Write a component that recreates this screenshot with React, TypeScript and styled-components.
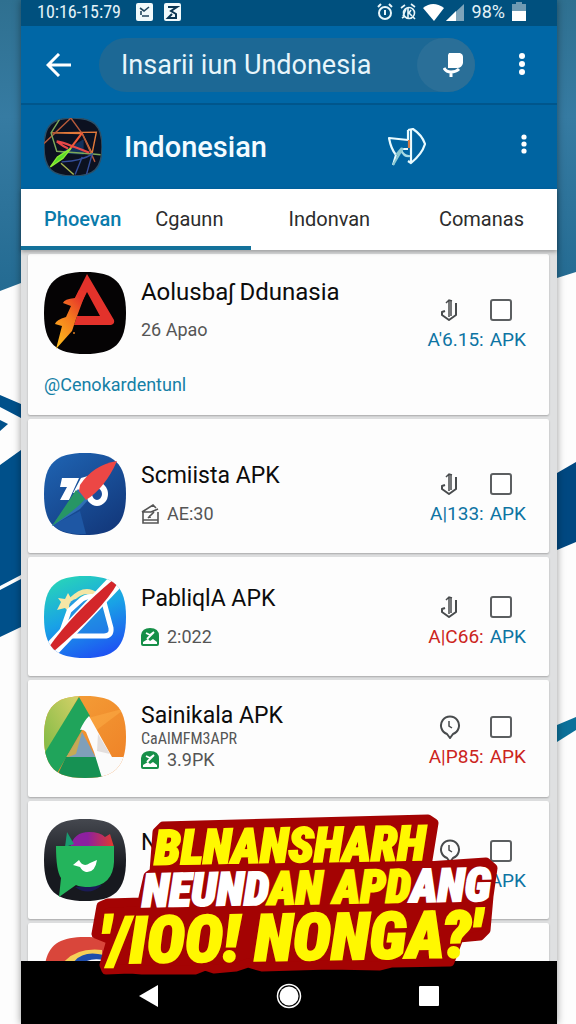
import React from 'react';
import styled, { createGlobalStyle } from 'styled-components';

const GlobalStyle = createGlobalStyle`
  * { box-sizing: border-box; }
  html, body { margin: 0; padding: 0; }
  body { background: #fdfdfd; font-family: Roboto, "Liberation Sans", sans-serif; color: #0c0c0c; }
  button, input { font: inherit; color: inherit; margin: 0; padding: 0; border: 0; background: none; }
  svg { display: block; flex: none; }
`;

const Page = styled.div`
  position: relative;
  height: 100vh;
  padding: 0 19px 0 21px;
  overflow: hidden;
`;

const Backdrop = styled.svg`
  position: absolute;
  inset: 0;
  width: 100%;
  height: 100%;
`;

const Phone = styled.div`
  position: relative;
  display: flex;
  flex-direction: column;
  height: 100%;
  background: #dfe0e1;
  box-shadow: 0 0 8px rgba(0, 0, 0, 0.4);
`;

const StatusBar = styled.div`
  display: flex;
  align-items: center;
  height: 26px;
  flex: none;
  padding: 0 31px 3px 16px;
  background: #00507e;
  color: #e4f3f8;
  font-size: 18px;
  line-height: 20px;
`;

const StatusGroup = styled.div<{ $gap: number }>`
  display: flex;
  align-items: center;
  gap: ${(p) => p.$gap}px;
`;

const Time = styled.span`
  font-family: "Roboto Condensed", Roboto, sans-serif;
  font-size: 18px;
  margin-right: 4px;
`;

const Spacer = styled.div`
  flex: 1;
`;

const SearchBar = styled.div`
  display: flex;
  align-items: center;
  height: 79px;
  flex: none;
  padding: 0 19px 0 22px;
  background: #0067a6;
  border-bottom: 2px solid #00568c;
`;

const IconButton = styled.button`
  display: flex;
  align-items: center;
  justify-content: center;
  flex: none;
  width: 32px;
  height: 48px;
  color: #fff;
  cursor: pointer;
`;

const SearchPill = styled.label`
  display: flex;
  align-items: center;
  flex: 1;
  min-width: 0;
  height: 54px;
  margin: 0 31px 0 24px;
  padding-left: 22px;
  border-radius: 27px;
  background: #1c6895;
`;

const SearchInput = styled.input`
  flex: 1;
  min-width: 0;
  color: #e8f6fb;
  font-size: 27px;
  line-height: 36px;
  outline: none;
`;

const MicButton = styled.button`
  display: flex;
  align-items: center;
  justify-content: center;
  flex: none;
  width: 58px;
  height: 54px;
  padding-left: 14px;
  border-radius: 27px;
  background: #2a6f98;
  cursor: pointer;
`;

const TitleBar = styled.header`
  display: flex;
  align-items: center;
  height: 84px;
  flex: none;
  padding: 0 17px 0 23px;
  background: #0064a1;
`;

const Heading = styled.h1`
  flex: 1;
  margin: 0 0 0 22px;
  color: #f4fbff;
  font-size: 29px;
  font-weight: 500;
  line-height: 40px;
`;

const ShareButton = styled(IconButton)`
  width: 40px;
  margin-right: 81px;
`;

const TabBar = styled.nav`
  display: flex;
  height: 61px;
  flex: none;
  background: #fff;
  box-shadow: 0 2px 4px rgba(0, 0, 0, 0.3);
  position: relative;
`;

const TabGroup = styled.div<{ $lead?: boolean }>`
  display: flex;
  justify-content: space-between;
  flex: ${(p) => (p.$lead ? '0 0 43%' : '1')};
  padding: ${(p) => (p.$lead ? '3px 28px 0 23px' : '3px 33px 0 37px')};
  border-bottom: 4px solid ${(p) => (p.$lead ? '#13719a' : '#fff')};
`;

const Tab = styled.button<{ $active?: boolean }>`
  color: ${(p) => (p.$active ? '#0a7bab' : '#2c2c2c')};
  font-size: 20px;
  font-weight: ${(p) => (p.$active ? 500 : 400)};
  line-height: 28px;
  cursor: pointer;
`;

const List = styled.main`
  display: flex;
  flex-direction: column;
  gap: 4px;
  flex: 1;
  min-height: 0;
  padding: 4px 8px 0 7px;
  overflow: hidden;
`;

const Card = styled.article<{ $top: number; $bottom: number }>`
  flex: none;
  padding: ${(p) => p.$top}px 23px ${(p) => p.$bottom}px 16px;
  border-radius: 2px;
  background: #fdfdfd;
  box-shadow: 0 1px 2px rgba(0, 0, 0, 0.25);
`;

const CardRow = styled.div`
  display: flex;
  align-items: center;
`;

const Info = styled.div<{ $gap: number; $raised: boolean }>`
  display: flex;
  flex-direction: column;
  flex: 1;
  gap: ${(p) => p.$gap}px;
  min-width: 0;
  margin-left: 15px;
  padding-bottom: ${(p) => (p.$raised ? 6 : 0)}px;
`;

const AppName = styled.h2<{ $lead: boolean }>`
  margin: 0;
  font-size: ${(p) => (p.$lead ? 24 : 23)}px;
  font-weight: 400;
  line-height: 28px;
  white-space: nowrap;
`;

const Publisher = styled.div`
  color: #555;
  font-family: "Roboto Condensed", Roboto, sans-serif;
  font-size: 16px;
  line-height: 18px;
`;

const Meta = styled.div`
  display: flex;
  align-items: center;
  gap: 7px;
  min-height: 24px;
  color: #555;
  font-size: 18px;
  line-height: 24px;
`;

const Actions = styled.div<{ $drop: number }>`
  display: flex;
  flex-direction: column;
  align-items: flex-end;
  gap: 6px;
  padding-top: ${(p) => p.$drop}px;
`;

const ActionIcons = styled.div`
  display: flex;
  align-items: center;
  gap: 28px;
  padding-right: 14px;
`;

const DownloadButton = styled.button`
  display: flex;
  width: 24px;
  height: 24px;
  cursor: pointer;
`;

const Check = styled.input`
  appearance: none;
  width: 22px;
  height: 22px;
  border: 2px solid #5c5f61;
  border-radius: 3px;
  background: #fff;
`;

const Price = styled.div`
  display: flex;
  gap: 6px;
  font-size: 19px;
  line-height: 24px;
`;

const Tint = styled.span<{ $red?: boolean }>`
  color: ${(p) => (p.$red ? '#cc2420' : '#0d74a3')};
`;

const Mention = styled.a`
  display: inline-block;
  margin-top: 19px;
  color: #1580a6;
  font-size: 18px;
  line-height: 24px;
  text-decoration: none;
`;

const NavBar = styled.footer`
  display: flex;
  align-items: center;
  justify-content: center;
  gap: 92px;
  height: 63px;
  flex: none;
  padding-top: 6px;
  background: #000;
`;

const NavButton = styled(IconButton)`
  width: 48px;
`;

const Caption = styled.div`
  position: absolute;
  left: 91px;
  bottom: 46px;
  width: 408px;
  height: 166px;
  pointer-events: none;
`;

const CaptionPlate = styled.svg`
  position: absolute;
  inset: 0;
`;

const CaptionText = styled.div`
  position: relative;
  display: flex;
  flex-direction: column;
  padding-top: 13px;
  transform: rotate(-1deg);
  color: #fff800;
  font-family: "Roboto Condensed", "Liberation Sans Narrow", Roboto, sans-serif;
  font-style: italic;
  font-weight: 900;
  white-space: nowrap;
  -webkit-text-stroke: 2px currentColor;
`;

const CaptionLine = styled.div<{ $size: number; $line: number; $indent: number }>`
  padding-left: ${(p) => p.$indent}px;
  font-size: ${(p) => p.$size}px;
  line-height: ${(p) => p.$line}px;
`;

const White = styled.span`
  color: #fff;
  -webkit-text-stroke: 2px #fff;
`;

const Dots = () => (
  <svg width="8" height="26" viewBox="0 0 8 26" fill="#fff">
    <circle cx="4" cy="4" r="3" />
    <circle cx="4" cy="12" r="3" />
    <circle cx="4" cy="20" r="3" />
  </svg>
);

const Hook = () => (
  <svg width="24" height="24" viewBox="0 0 24 24" fill="none" stroke="#484b4d" strokeWidth="2">
    <path d="M7 13L4 14V17L11 22L18 17V5" strokeLinejoin="round" />
    <path d="M11 19V2M8 5l3-3l3 1M13 3v15" strokeWidth="1.5" />
  </svg>
);

const ClockPin = () => (
  <svg width="24" height="24" viewBox="0 0 24 24" fill="none" stroke="#484b4d" strokeWidth="2">
    <path d="M12 23l-3-4a9 9 0 1 1 6 0z" />
    <path d="M11 6v5l3 2" strokeWidth="1.5" />
  </svg>
);

const HouseMark = () => (
  <svg width="19" height="20" viewBox="0 0 19 20" fill="none" stroke="#555" strokeWidth="1.6">
    <path d="M2 8v11h15V8M2 16h15M1 8l11-7l3 3M1 8h9l7-3M7 14l6-6M9 14v-3" />
  </svg>
);

const GreenMark = () => (
  <svg width="19" height="20" viewBox="0 0 19 20">
    <path d="M0 8Q1 1 9 1Q18 1 18 9V17Q18 19 16 19H2Q0 19 0 17Z" fill="#168f48" />
    <path d="M2 15l5-3l2 2l3-2l4 3v2H2z" fill="#fff" />
    <path d="M5 6l4 2l4-3M6 12l7-7" stroke="#fff" strokeWidth="1.8" fill="none" />
  </svg>
);

const SQUIRCLE = 'M41 0C70 0 82 10 82 41C82 72 70 82 41 82C12 82 0 72 0 41C0 10 12 0 41 0Z';

const BoltIcon = () => (
  <svg width="82" height="82" viewBox="0 0 82 82">
    <defs>
      <linearGradient id="bolt" x1="0" y1="1" x2="0.6" y2="0">
        <stop offset="0" stopColor="#ffc31c" />
        <stop offset="0.6" stopColor="#f57b1e" />
        <stop offset="1" stopColor="#e6352a" />
      </linearGradient>
    </defs>
    <path d={SQUIRCLE} fill="#050304" />
    <path d="M43 2L70 48Q71 52 67 53H30L33 44H56L43 20L36 34L30 28Z" fill="#e3322b" />
    <path d="M35 18L42 20L32 47L30 53L28 59L12 77L18 54L11 52Q12 48 22 45L27 34L19 31Q20 27 31 26Z" fill="url(#bolt)" />
    <circle cx="30" cy="61" r="1" fill="#d87a1e" />
  </svg>
);

const FeatherIcon = () => (
  <svg width="82" height="82" viewBox="0 0 82 82">
    <defs>
      <linearGradient id="navy" x1="0" y1="0" x2="0.7" y2="1">
        <stop offset="0" stopColor="#1f65b4" />
        <stop offset="1" stopColor="#133a7e" />
      </linearGradient>
    </defs>
    <path d={SQUIRCLE} fill="url(#navy)" />
    <path d="M36 58L42 81Q25 82 14 76L9 72Z" fill="#1e57a4" />
    <path d="M18 25H35L25 47H16L23 34H16ZM37 25L44 23L34 40H29Z" fill="#fff" />
    <ellipse cx="53" cy="41" rx="8" ry="9" fill="#1a4b98" stroke="#fff" strokeWidth="6" />
    <path d="M34 36L44 47L36 56L8 73Z" fill="#2f70b5" />
    <path d="M8 73L32 37L41 46Q34 55 8 73Z" fill="#279665" />
    <path d="M73 8Q49 12 36 32L35 38L42 47Q61 35 73 8Z" fill="#ec4745" />
  </svg>
);

const SlashIcon = () => (
  <svg width="82" height="82" viewBox="0 0 82 82">
    <defs>
      <linearGradient id="aqua" x1="0.2" y1="0" x2="0.6" y2="1">
        <stop offset="0" stopColor="#28d5b8" />
        <stop offset="0.5" stopColor="#19a2e6" />
        <stop offset="1" stopColor="#1e55f2" />
      </linearGradient>
      <clipPath id="aquaClip"><path d={SQUIRCLE} /></clipPath>
    </defs>
    <g clipPath="url(#aquaClip)">
      <rect width="82" height="82" fill="url(#aqua)" />
      <path d="M27 24Q41 10 52 19" stroke="#f4e6a4" strokeWidth="5" fill="none" />
      <path d="M24 17L28 24L36 28L28 32L26 37L21 32L13 34L17 26L14 22L21 23Z" fill="#f7e7a6" />
      <circle cx="33" cy="31" r="8" fill="#249ee1" />
      <path d="M25 35L18 55Q17 60 24 60H60Q68 60 67 52L60 26Q58 20 52 21Q42 19 36 25Z" stroke="#fff" strokeWidth="5" fill="#2582df" fillOpacity="0.5" />
      <path d="M1 69L66 0L79 9L10 82Z" fill="#fff" />
      <path d="M5 71Q28 38 70 3L73 8Q60 32 9 76Z" fill="#d3262a" />
    </g>
  </svg>
);

const PeakIcon = () => (
  <svg width="82" height="82" viewBox="0 0 82 82">
    <defs>
      <linearGradient id="leaf" x1="0" y1="1" x2="1" y2="0">
        <stop offset="0" stopColor="#7cb943" />
        <stop offset="1" stopColor="#d6d168" />
      </linearGradient>
      <linearGradient id="sun" x1="0" y1="0" x2="1" y2="1">
        <stop offset="0" stopColor="#f5a33a" />
        <stop offset="1" stopColor="#ee7f25" />
      </linearGradient>
      <clipPath id="peakClip"><path d={SQUIRCLE} /></clipPath>
    </defs>
    <g clipPath="url(#peakClip)">
      <rect width="82" height="82" fill="url(#sun)" />
      <path d="M0 0H35L0 62Z" fill="url(#leaf)" />
      <path d="M35 1L46 20L12 79L0 66V58Z" fill="#20a45b" />
      <path d="M82 12L50 36L44 22Z" fill="#fbaa45" opacity="0.6" />
      <path d="M38 36L52 62H22Z" fill="#7f9fb9" />
      <path d="M22 62L38 36L32 58Z" fill="#c5aa55" />
      <path d="M22 61H52L59 82H12Z" fill="#169153" />
      <path d="M36 34Q40 25 45 20L68 61H82V82H58L50 56L42 36Q39 33 36 34Z" fill="#fbfbfb" />
      <path d="M54 38L66 58L53 55Z" fill="#e3dfde" />
    </g>
  </svg>
);

const ChatIcon = () => (
  <svg width="82" height="84" viewBox="0 0 82 84">
    <defs>
      <linearGradient id="plum" x1="0" y1="0" x2="1" y2="0">
        <stop offset="0.4" stopColor="#8d209f" />
        <stop offset="1" stopColor="#e33b2c" />
      </linearGradient>
      <linearGradient id="coal" x1="0" y1="0" x2="0" y2="1">
        <stop offset="0" stopColor="#45484f" />
        <stop offset="0.6" stopColor="#17191f" />
      </linearGradient>
    </defs>
    <path d={SQUIRCLE} fill="url(#coal)" />
    <path d="M26 28Q30 13 45 13Q56 13 61 18L66 15L70 28Z" fill="url(#plum)" />
    <path d="M21 28L23 13L30 25Z" fill="#1a9a70" />
    <path d="M31 68Q45 78 58 66Z" fill="#1b1b56" />
    <path d="M12 27H70V43Q69 66 46 68Q36 68 32 66L15 78L17 59Q12 52 12 27Z" fill="#24b45c" />
    <path d="M29 46L35 41Q39 49 46 44L53 41Q51 54 42 53Q38 52 36 48Z" fill="#fff" />
  </svg>
);

const SwirlIcon = () => (
  <svg width="82" height="82" viewBox="0 0 82 82">
    <path d={SQUIRCLE} fill="#d9463b" />
    <path d="M16 30Q29 10 58 13V40H16Z" fill="#f6cf58" />
    <path d="M27 30Q35 12 60 18V40H27Z" fill="#1e4dab" />
    <path d="M36 30Q42 20 60 23V40H36Z" fill="#fff" />
  </svg>
);

const WebIcon = () => (
  <svg width="58" height="58" viewBox="0 0 82 82" fill="none" strokeWidth="2">
    <defs><clipPath id="webClip"><path d={SQUIRCLE} /></clipPath></defs>
    <path d={SQUIRCLE} fill="#0c1120" stroke="#2b5069" />
    <g clipPath="url(#webClip)">
      <path d="M22 50L56 30V52Z" fill="#12315c" />
      <path d="M10 21L74 20L68 50L54 22Z" stroke="#e2793a" />
      <path d="M0 36L38 0L54 22L72 62" stroke="#b55a3b" />
      <path d="M22 2L10 21L18 47L69 51L80 52" stroke="#7ca85a" />
      <path d="M18 33Q24 33 64 49M18 33Q27 40 34 43" stroke="#e74848" strokeWidth="3" />
      <path d="M54 21L35 46" stroke="#f05938" strokeWidth="3" />
      <path d="M9 69L19 55L38 43L27 57Z" fill="#54dd2a" stroke="#8dea35" />
      <path d="M24 64L42 80" stroke="#a7b850" />
      <path d="M25 62Q55 60 68 51L60 80M54 55L44 80" stroke="#344e9a" />
    </g>
  </svg>
);

type App = {
  name: string;
  icon: React.ReactNode;
  top: number;
  bottom: number;
  publisher?: string;
  mark?: React.ReactNode;
  meta?: string;
  code?: string;
  codeRed?: boolean;
  apkRed?: boolean;
  clock?: boolean;
  mention?: string;
};

const apps: App[] = [
  { name: 'Aolusbaʃ Ddunasia', icon: <BoltIcon />, top: 18, bottom: 18, meta: '26 Apao', code: "A'6.15:", mention: '@Cenokardentunl' },
  { name: 'Scmiista APK', icon: <FeatherIcon />, top: 34, bottom: 18, mark: <HouseMark />, meta: 'AE:30', code: 'A|133:' },
  { name: 'PabliqlA APK', icon: <SlashIcon />, top: 19, bottom: 18, mark: <GreenMark />, meta: '2:022', code: 'A|C66:', codeRed: true },
  { name: 'Sainikala APK', icon: <PeakIcon />, top: 16, bottom: 19, publisher: 'CaAlMFM3APR', mark: <GreenMark />, meta: '3.9PK', code: 'A|P85:', codeRed: true, apkRed: true, clock: true },
  { name: 'N', icon: <ChatIcon />, top: 18, bottom: 16, clock: true },
];

export default function App() {
  return (
    <Page>
      <GlobalStyle />
      <Backdrop viewBox="0 0 576 1024" preserveAspectRatio="none" aria-hidden="true">
        <defs>
          <linearGradient id="sky" x1="0" y1="0" x2="0" y2="1">
            <stop offset="0" stopColor="#2f7090" />
            <stop offset="0.4" stopColor="#367ba2" />
            <stop offset="1" stopColor="#246b92" />
          </linearGradient>
        </defs>
        <path d="M0 0H576V272L557 278H21V283L0 291Z" fill="url(#sky)" />
        <path d="M0 395L21 404V418L0 407ZM0 420L8 424L0 431ZM0 465L21 450V575L0 586ZM0 590L21 579V627L0 637Z" fill="#00508a" />
        <path d="M557 473L576 462V542L557 550Z" fill="#004881" />
        <path d="M557 725L576 717V730L557 742Z" fill="#0c719a" />
      </Backdrop>

      <Phone>
        <StatusBar>
          <StatusGroup $gap={11}>
            <Time>10:16-15:79</Time>
            <svg width="17" height="18" viewBox="0 0 17 18"><rect width="17" height="18" rx="2" fill="#f1fafc" /><path d="M4 5l4 3l5-4M5 12V8M6 13h7" stroke="#20465e" strokeWidth="1.6" fill="none" /></svg>
            <svg width="17" height="18" viewBox="0 0 17 18"><rect width="17" height="18" rx="2" fill="#f1fafc" /><path d="M4 4h9l-6 4l5 3v4H4l4-4" stroke="#0a3552" strokeWidth="2" fill="none" /></svg>
          </StatusGroup>
          <Spacer />
          <StatusGroup $gap={7}>
            <svg width="16" height="18" viewBox="0 0 16 18" fill="none" stroke="#e8f6fa" strokeWidth="2"><circle cx="8" cy="10" r="6" /><path d="M8 7v5M1 4l3-3M15 4l-3-3" /></svg>
            <svg width="16" height="18" viewBox="0 0 16 18" fill="none" stroke="#e8f6fa" strokeWidth="1.6"><circle cx="9" cy="10" r="5.500" /><path d="M6 6l-3 7M8 5v10M11 7l-2 3l3 3M1 5l4-3M15 4l-4-3M2 15l3-2M15 16l-2-2" /></svg>
            <svg width="42" height="18" viewBox="0 0 42 18"><path d="M0 5Q10 -3 21 5L11 18Z" fill="#fff" /><path d="M23 18L41 1V18Z" fill="#7ea4ba" /><path d="M23 18L33 8V18Z" fill="#fff" /></svg>
            <span>98%</span>
            <svg width="14" height="19" viewBox="0 0 14 19"><path d="M4 0h6v2h4v7H0V2h4z" fill="#6f9ab3" /><path d="M0 9h14v10H0z" fill="#fff" /></svg>
          </StatusGroup>
        </StatusBar>

        <SearchBar>
          <IconButton aria-label="Back">
            <svg width="26" height="24" viewBox="0 0 26 24" fill="none" stroke="#fff" strokeWidth="3"><path d="M25 12H3M13 1L2 12L13 23" /></svg>
          </IconButton>
          <SearchPill>
            <SearchInput aria-label="Search" defaultValue="Insarii iun Undonesia" />
            <MicButton aria-label="Voice search">
              <svg width="21" height="26" viewBox="0 0 21 26"><path d="M6 1H17Q20 2 20 5V11Q19 16 14 16H5V3Z" fill="#fff" /><path d="M1 16Q3 20 8 20Q13 20 16 17M8 20V25" stroke="#fff" strokeWidth="3" fill="none" /></svg>
            </MicButton>
          </SearchPill>
          <IconButton aria-label="More options"><Dots /></IconButton>
        </SearchBar>

        <TitleBar>
          <WebIcon />
          <Heading>Indonesian</Heading>
          <ShareButton aria-label="Share">
            <svg width="38" height="38" viewBox="0 0 38 38" fill="none" stroke="#e9fbff" strokeWidth="2.2" strokeLinejoin="round">
              <path d="M20 2L25 1Q34 7 37 16Q34 26 23 35L20 33" />
              <path d="M20 2V12L1 10Q3 21 8 27L5 37M13 21H20M23 2V35" />
              <path d="M13 22Q16 29 22 28" stroke="#a9dbe4" />
              <path d="M5 37L15 20M8 27L14 20" stroke="#8cc9d2" />
              <path d="M21 12V20" stroke="#d77c45" />
            </svg>
          </ShareButton>
          <IconButton aria-label="More"><svg width="6" height="26" viewBox="0 0 6 26" fill="#fff"><circle cx="3" cy="3" r="2.600" /><circle cx="3" cy="10" r="2.600" /><circle cx="3" cy="17" r="2.600" /></svg></IconButton>
        </TitleBar>

        <TabBar>
          <TabGroup $lead>
            <Tab $active>Phoevan</Tab>
            <Tab>Cgaunn</Tab>
          </TabGroup>
          <TabGroup>
            <Tab>Indonvan</Tab>
            <Tab>Comanas</Tab>
          </TabGroup>
        </TabBar>

        <List>
          {apps.map((app) => (
            <Card key={app.name} $top={app.top} $bottom={app.bottom}>
              <CardRow>
                {app.icon}
                <Info $gap={app.publisher ? 0 : 12} $raised={!!app.mention}>
                  <AppName $lead={!!app.mention}>{app.name}</AppName>
                  {app.publisher && <Publisher>{app.publisher}</Publisher>}
                  <Meta>{app.mark}{app.meta}</Meta>
                </Info>
                <Actions $drop={app.mention ? 24 : 9}>
                  <ActionIcons>
                    <DownloadButton aria-label={`Download ${app.name}`}>{app.clock ? <ClockPin /> : <Hook />}</DownloadButton>
                    <Check type="checkbox" aria-label={`Select ${app.name}`} />
                  </ActionIcons>
                  <Price>
                    {app.code && <Tint $red={app.codeRed}>{app.code}</Tint>}
                    <Tint $red={app.apkRed}>APK</Tint>
                  </Price>
                </Actions>
              </CardRow>
              {app.mention && <Mention href="#profile">{app.mention}</Mention>}
            </Card>
          ))}
          <Card $top={14} $bottom={18}>
            <SwirlIcon />
          </Card>
        </List>

        <NavBar>
          <NavButton aria-label="Back"><svg width="20" height="24" viewBox="0 0 20 24"><path d="M0 12L19 1V23Z" fill="#fff" /></svg></NavButton>
          <NavButton aria-label="Home"><svg width="26" height="26" viewBox="0 0 26 26"><circle cx="13" cy="13" r="11.500" fill="none" stroke="#fff" strokeWidth="1.500" /><circle cx="13" cy="13" r="9.500" fill="#fff" /></svg></NavButton>
          <NavButton aria-label="Recent apps"><svg width="22" height="22" viewBox="0 0 22 22"><rect x="1" y="1" width="20" height="20" rx="1" fill="#fff" /></svg></NavButton>
        </NavBar>
      </Phone>

      <Caption>
        <CaptionPlate width="408" height="166" viewBox="91 812 408 166">
          <path
            d="M163 826L428 819L434 823L427 866L486 862L493 868L489 896L486 930L480 936L459 938L450 962L392 963L380 966L330 965L262 967L248 963L236 967L214 969L205 966L195 970L142 970L130 969L106 970L104 965L111 940L96 934L101 906L108 903L142 902L148 876L154 872L157 832Z"
            fill="#a40303"
            stroke="#a40303"
            strokeWidth="9"
            strokeLinejoin="round"
          />
        </CaptionPlate>
        <CaptionText>
          <CaptionLine $size={48} $line={42} $indent={64}>BLNANSHARH</CaptionLine>
          <CaptionLine $size={46} $line={42} $indent={51}><White>NEUND</White>AN APD<White>ANG</White></CaptionLine>
          <CaptionLine $size={65} $line={58} $indent={8}>'/IOO! NONGA?'</CaptionLine>
        </CaptionText>
      </Caption>
    </Page>
  );
}
